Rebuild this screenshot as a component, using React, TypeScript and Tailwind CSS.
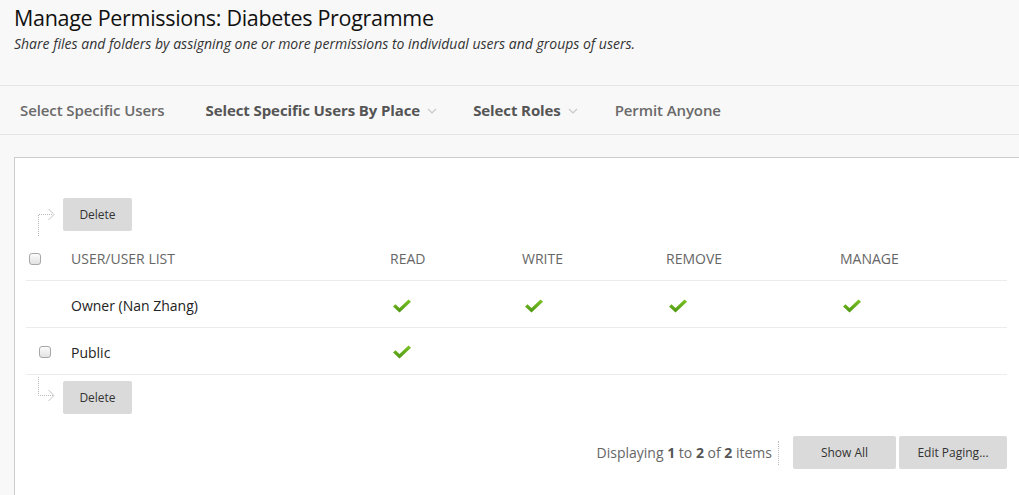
import React from "react";

const Check = () => (
  <svg width="20" height="16" viewBox="0 0 20 16" className="block">
    <defs>
      <linearGradient id="cg" x1="0" y1="0" x2="0" y2="1">
        <stop offset="0" stopColor="#7cc423" />
        <stop offset="1" stopColor="#4e9614" />
      </linearGradient>
    </defs>
    <path d="M1 8.5 L3.5 6.2 L7.5 10 L16.5 1.5 L19 3.8 L7.5 14.5 Z" fill="url(#cg)" />
  </svg>
);

const Box = () => (
  <span className="inline-block w-[12px] h-[12px] rounded-[3px] border border-[#a8a8a8] bg-gradient-to-b from-[#fbfbfb] to-[#e2e2e2]" />
);

const Chevron = () => (
  <svg width="10" height="6" viewBox="0 0 10 6" className="ml-[7px] mt-[2px]">
    <path d="M1 1 L5 5 L9 1" fill="none" stroke="#c8c8c8" strokeWidth="1.2" />
  </svg>
);

const ArrowTop = () => (
  <svg width="22" height="32" viewBox="0 0 22 32" className="block">
    <path d="M3.5 31 V9.5 H18" fill="none" stroke="#b8b8b8" strokeWidth="1" strokeDasharray="1 1" />
    <path d="M13.5 4 L19 9.5 L13.5 15" fill="none" stroke="#c4c4c4" strokeWidth="1" />
  </svg>
);

const ArrowBottom = () => (
  <svg width="22" height="26" viewBox="0 0 22 26" className="block">
    <path d="M3.5 1 V19.5 H18" fill="none" stroke="#b8b8b8" strokeWidth="1" strokeDasharray="1 1" />
    <path d="M13.5 14 L19 19.5 L13.5 25" fill="none" stroke="#c4c4c4" strokeWidth="1" />
  </svg>
);

const Btn = ({ children, w, extra = "" }: { children: React.ReactNode; w: string; extra?: string }) => (
  <div className={`${w} ${extra} h-[33px] rounded-[2px] bg-[#dadada] flex items-center justify-center text-[12px] text-[#333]`}>
    {children}
  </div>
);

export default function App() {
  const font = { fontFamily: '"Open Sans", "Noto Sans", sans-serif' };
  return (
    <div className="w-[1019px] h-[495px] overflow-hidden bg-[#f8f8f8] text-[#333]" style={font}>
      <div className="h-[85px] px-[14px] pt-[3px]">
        <h1 className="text-[21.5px] leading-[30px] text-[#111] tracking-[-0.3px]">Manage Permissions: Diabetes Programme</h1>
        <p className="italic text-[14px] leading-[18px] text-[#333] mt-[2px]">
          Share files and folders by assigning one or more permissions to individual users and groups of users.
        </p>
      </div>
      <div className="h-[50px] border-t border-b border-[#e6e6e6] flex items-center pl-[20px] text-[15px] text-[#666] tracking-[-0.1px]">
        <span className="font-semibold text-[#6a6a6a]">Select Specific Users</span>
        <span className="ml-[41px] font-bold text-[#555] flex items-center">Select Specific Users By Place<Chevron /></span>
        <span className="ml-[36px] font-bold text-[#555] flex items-center">Select Roles<Chevron /></span>
        <span className="ml-[37px] font-semibold text-[#6a6a6a]">Permit Anyone</span>
      </div>
      <div className="ml-[14px] mt-[22px] h-[400px] bg-white border-l border-t border-[#cccccc] pl-[11px] pr-[12px] pt-[40px]">
        <div className="flex items-start h-[34px]">
          <div className="w-[37px] pl-[9px] pt-[7px]"><ArrowTop /></div>
          <Btn w="w-[69px]">Delete</Btn>
        </div>
        <div className="text-[14px]">
          <div className="flex items-center h-[49px] text-[#666] border-b border-[#ececec] pt-[5px]">
            <div className="w-[32px] pl-[3px] flex"><Box /></div>
            <div className="w-[318px] pl-[13px]">USER/USER LIST</div>
            <div className="w-[132px] pl-[14px]">READ</div>
            <div className="w-[144px] pl-[14px]">WRITE</div>
            <div className="w-[174px] pl-[14px]">REMOVE</div>
            <div className="flex-1 pl-[14px]">MANAGE</div>
          </div>
          <div className="flex items-center h-[47px] text-[#222] border-b border-[#ececec] pt-[3px]">
            <div className="w-[32px]" />
            <div className="w-[318px] pl-[13px]">Owner (Nan Zhang)</div>
            <div className="w-[132px] pl-[16px]"><Check /></div>
            <div className="w-[144px] pl-[16px]"><Check /></div>
            <div className="w-[174px] pl-[16px]"><Check /></div>
            <div className="flex-1 pl-[16px]"><Check /></div>
          </div>
          <div className="flex items-center h-[47px] text-[#222] border-b border-[#ececec] pt-[2px]">
            <div className="w-[32px] pl-[13px] flex"><Box /></div>
            <div className="w-[318px] pl-[13px]">Public</div>
            <div className="w-[132px] pl-[16px]"><Check /></div>
            <div className="w-[144px]" />
            <div className="w-[174px]" />
            <div className="flex-1" />
          </div>
        </div>
        <div className="flex items-start h-[39px] mt-[1px]">
          <div className="w-[37px] pl-[9px]"><ArrowBottom /></div>
          <Btn w="w-[69px]" extra="mt-[5px]">Delete</Btn>
        </div>
        <div className="flex items-center justify-end mt-[21px]">
          <span className="text-[14px] text-[#666]">
            Displaying <b className="text-[#555]">1</b> to <b className="text-[#555]">2</b> of <b className="text-[#555]">2</b> items
          </span>
          <span className="ml-[6px] mr-[14px] h-[24px] border-l border-dotted border-[#bbb]" />
          <Btn w="w-[103px]">Show All</Btn>
          <div className="w-[3px]" />
          <Btn w="w-[108px]">Edit Paging...</Btn>
        </div>
      </div>
    </div>
  );
}
